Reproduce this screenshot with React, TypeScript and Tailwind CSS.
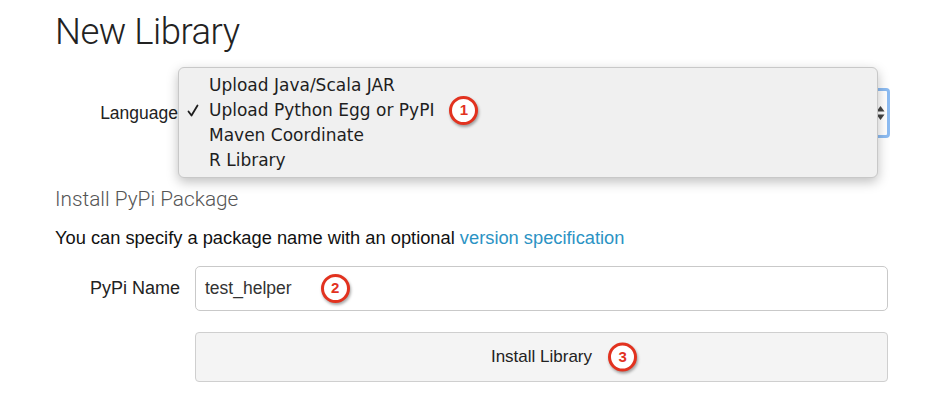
import React from "react";

function Badge({ n }: { n: number }) {
  return (
    <span className="inline-flex items-center justify-center w-[29px] h-[29px] rounded-full border-[3px] border-[#e2321f] bg-white text-[#e2321f] text-[15px] font-semibold shadow-[1px_2px_3px_rgba(0,0,0,0.35)] [font-family:'Liberation_Sans',Arial,sans-serif]">
      {n}
    </span>
  );
}

const options = [
  "Upload Java/Scala JAR",
  "Upload Python Egg or PyPI",
  "Maven Coordinate",
  "R Library",
];

export default function App() {
  return (
    <div className="relative w-[946px] h-[408px] overflow-hidden bg-white text-[#222] [font-family:'Liberation_Sans',Arial,sans-serif]">
      <div className="pl-[55px] pt-[9px]">
        <h1 className="text-[36.5px] leading-[46px] font-light tracking-[-0.5px] text-[#222] [font-family:Roboto,sans-serif]">
          New Library
        </h1>

        <div className="relative mt-[33px] flex items-center h-[50px]">
          <label className="w-[123px] text-right text-[17.5px]">Language</label>
          <div className="ml-[12px] flex-1 mr-[56px] h-[50px] rounded-[4px] border-[3px] border-[#8dbcf2] bg-white flex items-center justify-end pr-[2px]">
            <svg width="9" height="16" viewBox="0 0 9 16" className="fill-[#444]">
              <path d="M4.5 1 L8.5 6.5 L0.5 6.5 Z" />
              <path d="M4.5 15 L8.5 9.5 L0.5 9.5 Z" />
            </svg>
          </div>

          <div className="absolute left-[123px] top-[-21px] w-[700px] h-[111px] rounded-[6px] border border-[#c8c8c8] bg-[#f0f0f0] shadow-[0_4px_12px_rgba(0,0,0,0.25)] pt-[5px] [font-family:'DejaVu_Sans',sans-serif]">
            {options.map((o, i) => (
              <div key={o} className="relative flex items-center h-[25px] pl-[30px] text-[17px] text-[#1e1e1e]">
                {i === 1 && (
                  <svg
                    width="12"
                    height="13"
                    viewBox="0 0 12 13"
                    className="absolute left-[8px] top-[6px] fill-none stroke-[#1e1e1e]"
                    strokeWidth="1.8"
                    strokeLinecap="round"
                    strokeLinejoin="round"
                  >
                    <path d="M1.5 7.5 L4.5 11.5 L10.5 1.5" />
                  </svg>
                )}
                <span>{o}</span>
                {i === 1 && (
                  <span className="ml-[15px]">
                    <Badge n={1} />
                  </span>
                )}
              </div>
            ))}
          </div>
        </div>

        <h2 className="mt-[48px] text-[20.8px] leading-[26px] font-light text-[#555] [font-family:Roboto,sans-serif]">
          Install PyPi Package
        </h2>

        <p className="mt-[14px] text-[18.3px] leading-[24px] text-[#111]">
          You can specify a package name with an optional{" "}
          <span className="text-[#2b93c4]">version specification</span>
        </p>

        <div className="mt-[16px] flex items-center">
          <label className="w-[125px] text-right text-[18px]">PyPi Name</label>
          <div className="ml-[15px] w-[693px] h-[45px] rounded-[5px] border border-[#c9c9c9] bg-white flex items-center pl-[9px] text-[17.5px] text-[#333]">
            <span>test_helper</span>
            <span className="ml-[29px]">
              <Badge n={2} />
            </span>
          </div>
        </div>

        <div className="mt-[21px] flex">
          <div className="ml-[140px] w-[693px] h-[50px] rounded-[4px] border border-[#cfcfcf] bg-[#f4f4f4] flex items-center justify-center text-[17px] text-[#222]">
            <span className="relative">
              Install Library
              <span className="absolute left-[calc(100%+16px)] top-1/2 -translate-y-1/2">
                <Badge n={3} />
              </span>
            </span>
          </div>
        </div>
      </div>
    </div>
  );
}
